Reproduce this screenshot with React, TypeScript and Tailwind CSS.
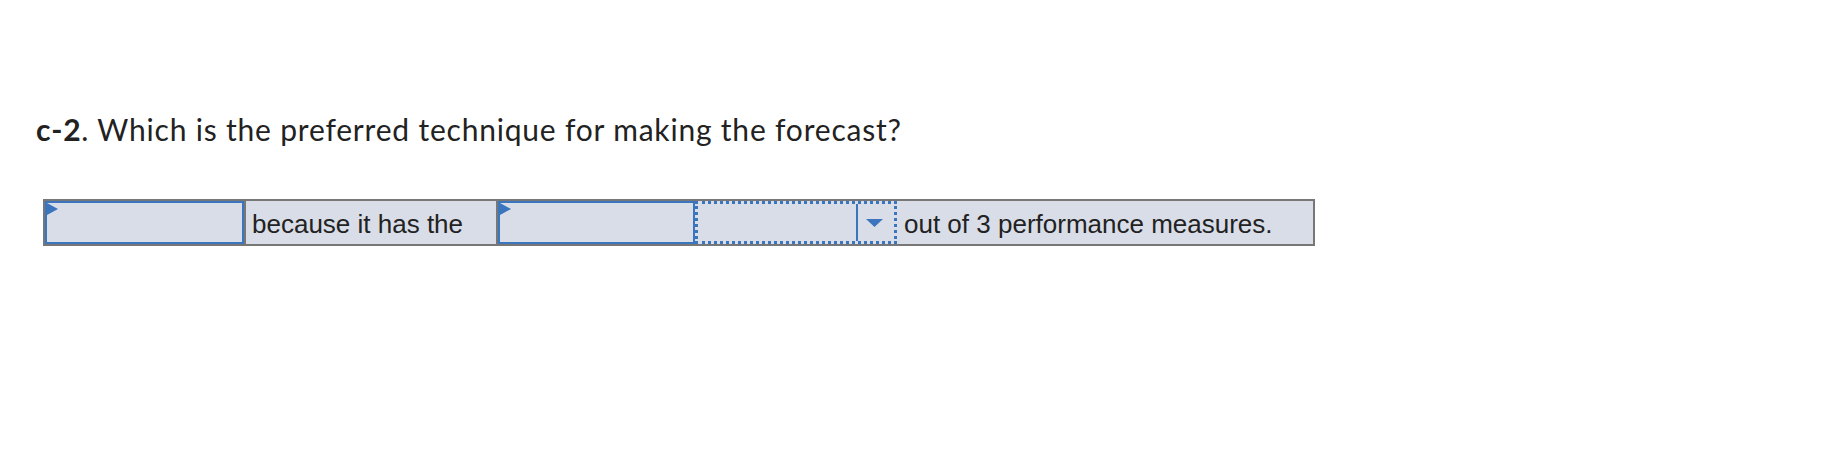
import React from 'react';

const BLUE = '#3a75be';

// little flag in the top-left corner of an empty answer box
const Flag = () => (
  <svg className="absolute left-0 top-0" width="12" height="13" viewBox="0 0 12 13">
    <polygon points="0,0 11,6 0,12" fill={BLUE} />
  </svg>
);

const AnswerBox: React.FC<{ width: string }> = ({ width }) => (
  <div className={`relative ${width} h-full border-2 border-[#3a75be] bg-[#d9dde7]`}>
    <Flag />
  </div>
);

export default function App() {
  return (
    <div className="w-[1832px] h-[466px] bg-white pl-[36px] pt-[110px] text-[#222]">
      <p className="text-[30px] leading-[38px] font-['Lato',sans-serif] tracking-[0.8px]">
        <span className="font-bold">c-2</span>. Which is the preferred technique for making the forecast?
      </p>

      <div className="ml-[7px] mt-[51px] flex w-[1272px] h-[47px] border-2 border-[#777] bg-[#d9dde7] font-['Liberation_Sans',Arial,sans-serif] text-[26px] leading-none">
        <AnswerBox width="w-[199px]" />
        <div className="w-[2px] h-full bg-[#777]" />
        <div className="w-[250px] h-full flex items-center pl-[6px] pt-[2px]">because it has the</div>
        <div className="w-[2px] h-full bg-[#777]" />
        <AnswerBox width="w-[197px]" />
        {/* focused dropdown */}
        <div className="w-[202px] h-full border-[3px] border-dotted border-[#3a75be] flex">
          <div className="w-[158px] h-full" />
          <div className="w-[2px] h-full bg-[#3a75be]" />
          <div className="flex-1 flex items-center justify-center pr-[4px]">
            <svg width="17" height="8" viewBox="0 0 17 8">
              <polygon points="0,0 17,0 8.5,8" fill={BLUE} />
            </svg>
          </div>
        </div>
        <div className="flex-1 h-full flex items-center pl-[7px] pt-[2px]">out of 3 performance measures.</div>
      </div>
    </div>
  );
}
